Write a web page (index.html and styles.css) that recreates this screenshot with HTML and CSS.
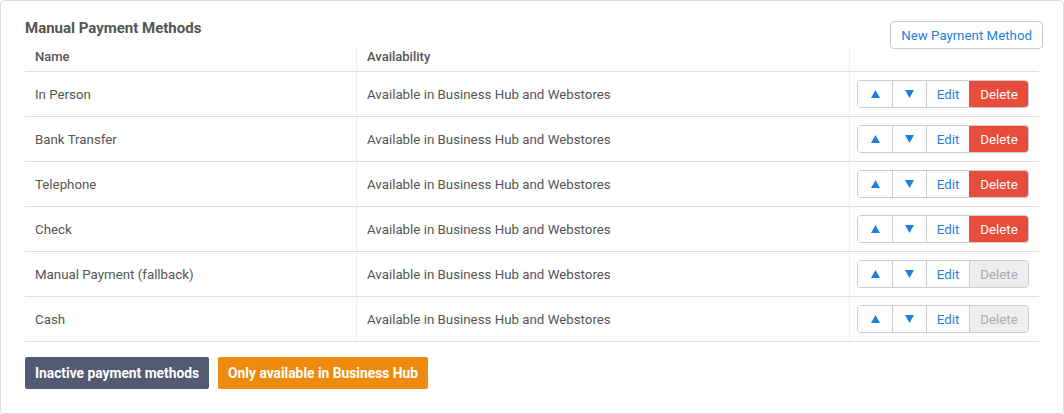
FILE: index.html
```html
<!DOCTYPE html>
<html>
<head>
<meta charset="utf-8">
<link rel="stylesheet" href="styles.css">
</head>
<body>
<div class="card">
  <div class="card-head">
    <h2 class="title">Manual Payment Methods</h2>
    <button class="btn-new">New Payment Method</button>
  </div>
  <table class="methods">
    <thead>
      <tr><th class="c-name">Name</th><th class="c-avail">Availability</th><th class="c-act"></th></tr>
    </thead>
    <tbody>
      <tr><td>In Person</td><td>Available in Business Hub and Webstores</td><td class="c-act"><div class="grp"><button class="seg arrow"><svg width="9" height="8" viewBox="0 0 9 8"><path d="M4.5 0L9 8H0z"/></svg></button><button class="seg arrow"><svg width="9" height="8" viewBox="0 0 9 8"><path d="M0 0H9L4.5 8z"/></svg></button><button class="seg edit">Edit</button><button class="seg del">Delete</button></div></td></tr>
      <tr><td>Bank Transfer</td><td>Available in Business Hub and Webstores</td><td class="c-act"><div class="grp"><button class="seg arrow"><svg width="9" height="8" viewBox="0 0 9 8"><path d="M4.5 0L9 8H0z"/></svg></button><button class="seg arrow"><svg width="9" height="8" viewBox="0 0 9 8"><path d="M0 0H9L4.5 8z"/></svg></button><button class="seg edit">Edit</button><button class="seg del">Delete</button></div></td></tr>
      <tr><td>Telephone</td><td>Available in Business Hub and Webstores</td><td class="c-act"><div class="grp"><button class="seg arrow"><svg width="9" height="8" viewBox="0 0 9 8"><path d="M4.5 0L9 8H0z"/></svg></button><button class="seg arrow"><svg width="9" height="8" viewBox="0 0 9 8"><path d="M0 0H9L4.5 8z"/></svg></button><button class="seg edit">Edit</button><button class="seg del">Delete</button></div></td></tr>
      <tr><td>Check</td><td>Available in Business Hub and Webstores</td><td class="c-act"><div class="grp"><button class="seg arrow"><svg width="9" height="8" viewBox="0 0 9 8"><path d="M4.5 0L9 8H0z"/></svg></button><button class="seg arrow"><svg width="9" height="8" viewBox="0 0 9 8"><path d="M0 0H9L4.5 8z"/></svg></button><button class="seg edit">Edit</button><button class="seg del">Delete</button></div></td></tr>
      <tr><td>Manual Payment (fallback)</td><td>Available in Business Hub and Webstores</td><td class="c-act"><div class="grp"><button class="seg arrow"><svg width="9" height="8" viewBox="0 0 9 8"><path d="M4.5 0L9 8H0z"/></svg></button><button class="seg arrow"><svg width="9" height="8" viewBox="0 0 9 8"><path d="M0 0H9L4.5 8z"/></svg></button><button class="seg edit">Edit</button><button class="seg del disabled">Delete</button></div></td></tr>
      <tr><td>Cash</td><td>Available in Business Hub and Webstores</td><td class="c-act"><div class="grp"><button class="seg arrow"><svg width="9" height="8" viewBox="0 0 9 8"><path d="M4.5 0L9 8H0z"/></svg></button><button class="seg arrow"><svg width="9" height="8" viewBox="0 0 9 8"><path d="M0 0H9L4.5 8z"/></svg></button><button class="seg edit">Edit</button><button class="seg del disabled">Delete</button></div></td></tr>
    </tbody>
  </table>
  <div class="legend">
    <span class="badge slate">Inactive payment methods</span>
    <span class="badge orange">Only available in Business Hub</span>
  </div>
</div>
</body>
</html>
```
FILE: styles.css
```css
html, body { margin: 0; padding: 0; background: #fff; }
body { font-family: Roboto, "Liberation Sans", Arial, sans-serif; font-size: 13.3px; color: #555; }
.card {
  box-sizing: border-box;
  width: 1064px; height: 414px;
  border: 1px solid #dcdcdc; border-radius: 4px;
  padding: 17px 20px 0 24px;
}
.card-head { display: flex; justify-content: space-between; align-items: flex-start; height: 27px; }
.title { margin: 0; font-size: 15px; font-weight: 700; line-height: 21px; color: #555; }
.btn-new {
  margin-top: 3px; height: 28px; padding: 0 10px;
  background: #fff; border: 1px solid #ccc; border-radius: 4px;
  font-family: inherit; font-size: 13.3px; color: #1f7fe0; position: relative; z-index: 1;
}
.methods { width: 1014px; border-collapse: collapse; table-layout: fixed; }
.methods th { text-align: left; font-weight: 500; font-size: 13px; color: #555; padding: 4px 10px 6px; line-height: 16px; border-bottom: 1px solid #ddd; }
.methods th.c-name { width: 311px; }
.methods th.c-avail { width: 472px; border-left: 1px solid #f0f0f0; }
.methods th.c-act { border-left: 1px solid #f0f0f0; }
.methods td { height: 42px; padding: 2px 10px 0; border-bottom: 1px solid #ddd; vertical-align: middle; line-height: 16px; }
.methods td + td { border-left: 1px solid #f0f0f0; }
.methods td.c-act { height: 44px; padding: 0 10px 0 0; text-align: right; }
.grp { display: inline-flex; height: 28px; border: 1px solid #ccc; border-radius: 4px; box-sizing: border-box; overflow: hidden; vertical-align: middle; }
.seg {
  border: 0; border-left: 1px solid #ccc; margin: 0; padding: 0; height: 100%;
  background: #fff; font-family: inherit; font-size: 13.3px; color: #1f7fe0;
  display: flex; align-items: center; justify-content: center;
}
.seg:first-child { border-left: 0; }
.arrow { width: 34px; }
.arrow svg { fill: #1f7fe0; display: block; }
.edit { width: 43px; }
.del { width: 59px; background: #e74c3c; color: #fff; border-left-color: #e74c3c; }
.del.disabled { background: #eee; color: #aaa; border-left-color: #ccc; }
.legend { display: flex; gap: 9px; margin-top: 15px; }
.badge { height: 32px; padding: 0 10px; line-height: 32px; border-radius: 2px; color: #fff; font-weight: 700; font-size: 13.8px; }
.slate { background: #545a72; }
.orange { background: #ee8b0e; }
```
